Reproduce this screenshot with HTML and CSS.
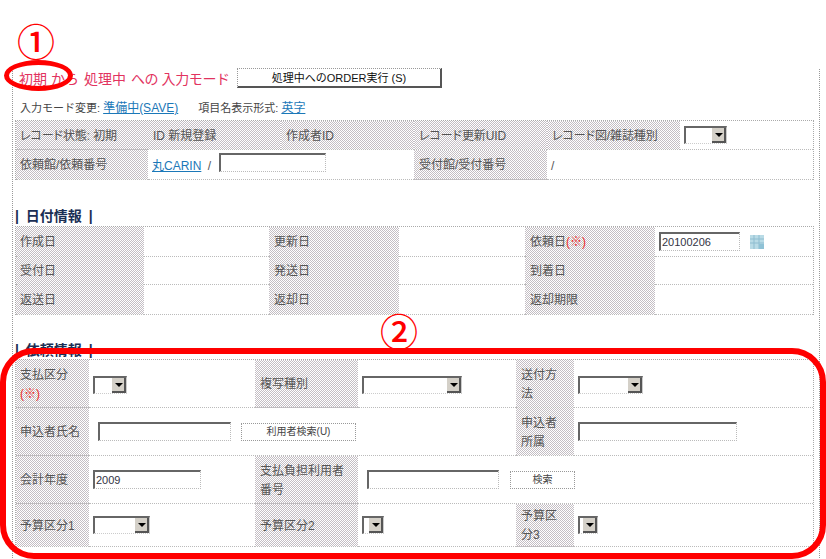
FILE: index.html
```html
<!DOCTYPE html>
<html lang="ja">
<head>
<meta charset="utf-8">
<title>入力モード</title>
<link rel="stylesheet" href="styles.css">
</head>
<body>
<main class="frame">
  <div class="title-row">
    <h1 class="title"><span>初期 から</span><span>処理中</span><span class="kana-tight">への 入力モード</span></h1>
    <button class="btn btn-order">処理中へのORDER実行 (S)</button>
  </div>
  <div class="meta-row">
    <span>入力モード変更: <a href="#">準備中(SAVE)</a></span>
    <span class="meta-second">項目名表示形式: <a href="#">英字</a></span>
  </div>
  <table class="grid grid-record">
    <colgroup><col class="r1"><col class="r2"><col class="r3"><col class="r4"><col class="r5"><col class="r6"></colgroup>
    <tr class="h29">
      <th class="kana">レコード状態: 初期</th><th>ID 新規登録</th><th>作成者ID</th><th class="kana">レコード更新UID</th><th class="kana">レコード図/雑誌種別</th>
      <td><span class="sel w43"><b class="arrow"></b></span></td>
    </tr>
    <tr class="h30">
      <th>依頼館/依頼番号</th>
      <td colspan="2"><a class="low" href="#">丸CARIN</a> <span class="slash low">/</span> <input class="inp w107" type="text"></td>
      <th>受付館/受付番号</th>
      <td colspan="2"><span class="low">/</span></td>
    </tr>
  </table>
  <h2 class="section section-date">| 日付情報 |</h2>
  <table class="grid grid-date">
    <colgroup><col class="d1"><col class="d2"><col class="d3"><col class="d4"><col class="d5"><col class="d6"></colgroup>
    <tr class="h30"><th>作成日</th><td></td><th>更新日</th><td></td><th>依頼日<em>(※)</em></th>
      <td><input class="inp w81" type="text" value="20100206"><svg class="cal" viewBox="0 0 16 16" width="16" height="16"><rect x="1" y="1" width="14" height="14" fill="#b9dbe6"/><path d="M1 5h14M1 9h14M5 1v14M10 1v14" stroke="#8fbdd0" stroke-width="1"/><path d="M10 10h5v5h-5z" fill="#8fc2d6"/></svg></td></tr>
    <tr class="h28"><th>受付日</th><td></td><th>発送日</th><td></td><th>到着日</th><td></td></tr>
    <tr class="h30"><th>返送日</th><td></td><th>返却日</th><td></td><th>返却期限</th><td></td></tr>
  </table>
  <h2 class="section section-request">| 依頼情報 |</h2>
  <table class="grid grid-request">
    <colgroup><col class="q1"><col class="q2"><col class="q3"><col class="q4"><col class="q5"><col class="q6"></colgroup>
    <tr class="h48">
      <th>支払区分<br><em>(※)</em></th><td class="top"><span class="sel w34"><b class="arrow"></b></span></td>
      <th>複写種別</th><td class="top"><span class="sel w100"><b class="arrow"></b></span></td>
      <th>送付方法</th><td class="top"><span class="sel w65"><b class="arrow"></b></span></td>
    </tr>
    <tr class="h48">
      <th>申込者氏名</th>
      <td colspan="3"><div class="inline inline-name"><input class="inp w133" type="text"><button class="btn btn-small w115">利用者検索(U)</button></div></td>
      <th>申込者所属</th><td><input class="inp w159" type="text"></td>
    </tr>
    <tr class="h48">
      <th>会計年度</th><td><input class="inp w108" type="text" value="2009"></td>
      <th>支払負担利用者番号</th>
      <td colspan="3"><div class="inline inline-payer"><input class="inp w132" type="text"><button class="btn btn-small w65">検索</button></div></td>
    </tr>
    <tr class="h43">
      <th>予算区分1</th><td><span class="sel w57"><b class="arrow"></b></span></td>
      <th>予算区分2</th><td><span class="sel w22"><b class="arrow"></b></span></td>
      <th>予算区分3</th><td><span class="sel w20"><b class="arrow"></b></span></td>
    </tr>
  </table>
</main>
<div class="mark mark-one">①</div>
<div class="mark mark-two">②</div>
<div class="ring"></div>
<div class="box"></div>
</body>
</html>
```

FILE: styles.css
```css
* { box-sizing: border-box; }
html, body { margin: 0; height: 559px; overflow: hidden; background: #fff; }
body {
  position: relative;
  font: 12px/19px "Liberation Sans", "Noto Sans CJK JP", sans-serif;
  color: #555;
}
.frame {
  margin: 70px 0 0 12px;
  width: 808px;
  height: 489px;
  padding-left: 2px;
  border-left: 1px dotted #999;
  border-right: 1px dotted #999;
}
a { color: #1b78b8; text-decoration: underline; }
.title-row {
  display: flex;
  align-items: center;
  height: 18px;
  margin-top: -1px;
  padding-left: 4px;
}
.title {
  display: flex;
  gap: 5px;
  width: 218px;
  margin: 0;
  padding-top: 2px;
  font-size: 14px;
  font-weight: 400;
  white-space: nowrap;
  color: #e2335f;
}
.kana-tight { letter-spacing: -0.4px; }
.btn {
  padding: 0;
  background: #fff;
  color: #222;
  font: 11px/14px "Liberation Sans", "Noto Sans CJK JP", sans-serif;
  border: 1px dotted #999;
  cursor: pointer;
}
.btn-order {
  width: 205px;
  height: 20px;
  border-right: 2px solid #555;
  border-bottom: 2px solid #555;
  color: #111;
}
.btn-small { height: 18px; font-size: 10px; color: #444; }
.meta-row {
  display: flex;
  height: 19px;
  margin-top: 10px;
  padding: 2px 0 0 5px;
  font-size: 11px;
  color: #444;
}
.meta-row a { font-size: 12px; }
.meta-second { margin-left: 20px; }
.grid {
  table-layout: fixed;
  border-collapse: separate;
  border-spacing: 0;
  width: 799px;
  border: 1px dotted #aaa;
  border-bottom: 0;
}
.grid-record { margin-top: 4px; }
.grid th, .grid td {
  padding: 0 4px;
  text-align: left;
  font-weight: 400;
  vertical-align: middle;
  border-bottom: 1px dotted #bbb;
  overflow: hidden;
}
.grid th {
  padding: 2px 4px 0 5px;
  background: #fff url("data:image/svg+xml,%3Csvg xmlns='http://www.w3.org/2000/svg' width='2' height='2' shape-rendering='crispEdges'%3E%3Crect width='1' height='1' fill='%23c4bec4'/%3E%3Crect x='1' y='1' width='1' height='1' fill='%23c4bec4'/%3E%3C/svg%3E") 0 0 / 2px 2px;
}
.grid th:first-child { padding-left: 4px; }
.grid th.kana { font-feature-settings: "palt"; letter-spacing: -0.1px; }
.grid-request th { padding-right: 7px; }
.grid td.top { vertical-align: top; padding-top: 15px; }
.grid em { font-style: normal; color: #ee2a2a; }
.low { vertical-align: -4px; }
.h28 { height: 28px; }
.h29 { height: 29px; }
.h30 { height: 30px; }
.h43 { height: 43px; }
.h48 { height: 48px; }
.r1 { width: 132px; }
.r2, .r3, .r4, .r5 { width: 133px; }
.r6 { width: 133px; }
.d1 { width: 128px; } .d2 { width: 125px; } .d3 { width: 130px; }
.d4 { width: 126px; } .d5 { width: 130px; } .d6 { width: 158px; }
.q1 { width: 73px; } .q2 { width: 166px; } .q3 { width: 103px; }
.q4 { width: 158px; } .q5 { width: 58px; } .q6 { width: 239px; }
.section {
  margin: 0;
  padding-top: 1px;
  height: 20px;
  color: #1b2f55;
  font-size: 14px;
  font-weight: 700;
  line-height: 19px;
  word-spacing: 3px;
  white-space: pre;
}
.section-date { margin-top: 26px; }
.section-request { margin: 25px 0 -1px; }
.slash { margin: 0 5px 0 3px; }
.inp {
  height: 19px;
  padding: 0 1px;
  vertical-align: middle;
  font: 11px/16px "Liberation Sans", sans-serif;
  color: #334;
  background: #fff;
  border-top: 2px solid #666;
  border-left: 2px solid #666;
  border-right: 1px dotted #bbb;
  border-bottom: 1px dotted #bbb;
  outline: 0;
}
.w81 { width: 81px; }
.w107 { width: 107px; }
.w108 { width: 108px; }
.w132 { width: 132px; }
.w133 { width: 133px; }
.w159 { width: 159px; }
.w65 { width: 65px; }
.w115 { width: 115px; }
.cal { margin-left: 9px; vertical-align: middle; }
.inline { display: flex; align-items: center; }
.inline-name { gap: 10px; padding-left: 5px; }
.inline-payer { gap: 11px; padding-left: 5px; }
.sel {
  display: inline-flex;
  justify-content: flex-end;
  height: 18px;
  vertical-align: middle;
  background: #fff;
  border-top: 2px solid #666;
  border-left: 2px solid #666;
  border-right: 1px solid #ccc;
  border-bottom: 1px dotted #ccc;
}
.w20 { width: 20px; } .w22 { width: 22px; } .w34 { width: 34px; }
.w43 { width: 43px; } .w57 { width: 57px; } .w65 { width: 65px; }
.w100 { width: 100px; }
.arrow {
  position: relative;
  flex: none;
  width: 14px;
  background: #d4d0c8;
  border-right: 2px solid #555;
  border-bottom: 2px solid #555;
}
.arrow::after {
  content: "";
  position: absolute;
  left: 3px;
  top: 5px;
  border: 4px solid transparent;
  border-top: 4px solid #000;
  border-bottom: 0;
}
.mark {
  position: absolute;
  color: #f00;
  font-family: "Noto Sans CJK JP", sans-serif;
  font-size: 38px;
  line-height: 38px;
  font-weight: 500;
}
.mark-one { left: 17px; top: 21px; }
.mark-two { left: 380px; top: 311px; }
.ring {
  position: absolute;
  left: 4px;
  top: 60px;
  width: 69px;
  height: 31px;
  border: 5px solid #f00;
  border-radius: 50%;
}
.box {
  position: absolute;
  left: 0;
  top: 348px;
  width: 826px;
  height: 211px;
  border: 6px solid #f00;
  border-radius: 34px;
}
```
